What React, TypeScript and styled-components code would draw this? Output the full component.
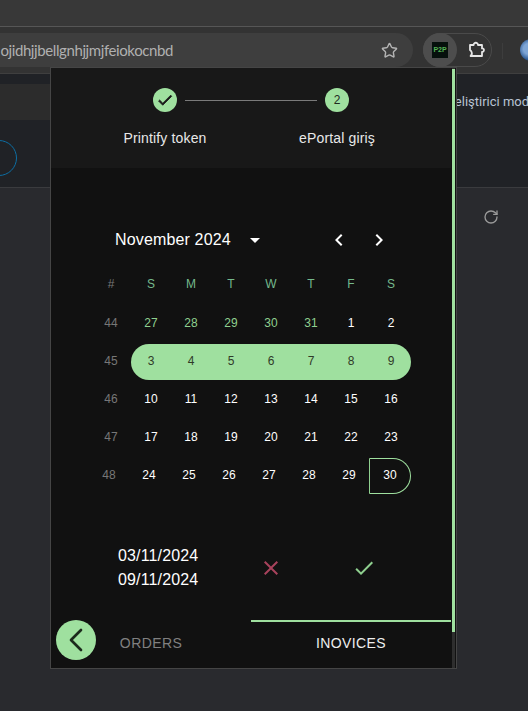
import styled, { createGlobalStyle } from "styled-components";
import { ChevronLeft, RotateCw, Star } from "lucide-react";

const GREEN = "#9fe09f";

const weeks = [
  { no: 44, days: [27, 28, 29, 30, 31, 1, 2], outside: 5 },
  { no: 45, days: [3, 4, 5, 6, 7, 8, 9], range: true },
  { no: 46, days: [10, 11, 12, 13, 14, 15, 16] },
  { no: 47, days: [17, 18, 19, 20, 21, 22, 23] },
  { no: 48, days: [24, 25, 26, 27, 28, 29, 30], shifted: true },
];

const heads = ["S", "M", "T", "W", "T", "F", "S"];

export default function App() {
  return (
    <Screen>
      <GlobalStyle />
      <TabStrip />
      <Toolbar>
        <AddressBar>
          <UrlClip>
            <Url>ojidhjjbellgnhjjmjfeiokocnbd</Url>
          </UrlClip>
          <Star size={17} strokeWidth={2} color="#b4b4b4" />
        </AddressBar>
        <ExtensionGroup>
          <ActiveExtension>
            <P2PIcon>P2P</P2PIcon>
          </ActiveExtension>
          <PuzzleSlot>
            <svg width="18" height="18" viewBox="0 0 18 18" fill="none" stroke="#e6e6e6" strokeWidth="1.8">
              <path d="M2 4h3.6c0-3 4.4-3 4.4 0H14v3.4c2.6-.6 2.6 4 0 3.4V15H2.6c1.6-1.4 1.4-3 1-4 -.4-1-1-1.6-1.6-2z" strokeLinejoin="round" />
            </svg>
          </PuzzleSlot>
        </ExtensionGroup>
        <ToolbarDivider />
        <Avatar />
      </Toolbar>
      <PageHeader>
        <RingSlot>
          <Banner />
          <Ring />
        </RingSlot>
        <DevMode>Geliştirici modu</DevMode>
      </PageHeader>
      <PageBody>
        <RotateCw size={16} strokeWidth={2} color="#9a9a9a" />
      </PageBody>

      <Popup>
        <Main>
          <StepHeader>
            <StepTrack>
              <StepCircle>
                <svg width="18" height="18" viewBox="0 0 24 24" fill="#1a1a1a" stroke="#1a1a1a" strokeWidth="1">
                  <path d="M9 16.17 4.83 12l-1.42 1.41L9 19 21 7l-1.41-1.41z" />
                </svg>
              </StepCircle>
              <StepLine />
              <StepCircle>2</StepCircle>
            </StepTrack>
            <StepLabels>
              <StepLabel>Printify token</StepLabel>
              <StepLabel>ePortal giriş</StepLabel>
            </StepLabels>
          </StepHeader>

          <CalendarHead>
            <MonthTitle>November 2024</MonthTitle>
            <HeadIcon>
              <path d="m7 10 5 5 5-5z" />
            </HeadIcon>
            <MonthNav>
              <HeadIcon>
                <path d="M15.41 7.41 14 6l-6 6 6 6 1.41-1.41L10.83 12z" />
              </HeadIcon>
              <HeadIcon>
                <path d="M10 6 8.59 7.41 13.17 12l-4.58 4.59L10 18l6-6z" />
              </HeadIcon>
            </MonthNav>
          </CalendarHead>

          <DayGrid>
            <HeadCell $muted>#</HeadCell>
            {heads.map((h, i) => (
              <HeadCell key={i}>{h}</HeadCell>
            ))}
            {weeks.map((w) => (
              <Week key={w.no}>
                <WeekNo $shifted={w.shifted}>{w.no}</WeekNo>
                {w.days.map((d, i) => {
                  if (w.range) {
                    return (
                      <RangeDay key={d} $first={i === 0} $last={i === 6}>
                        {d}
                      </RangeDay>
                    );
                  }
                  if (w.shifted && i === 6) {
                    return <EndDay key={d}>{d}</EndDay>;
                  }
                  return (
                    <Day key={d} $outside={w.outside !== undefined && i < w.outside} $shifted={w.shifted}>
                      {d}
                    </Day>
                  );
                })}
              </Week>
            ))}
          </DayGrid>

          <RangeFooter>
            <Dates>
              <div>03/11/2024</div>
              <div>09/11/2024</div>
            </Dates>
            <Actions>
              <ActionIcon viewBox="0 0 24 24" fill="#a8425c">
                <path d="M19 6.41 17.59 5 12 10.59 6.41 5 5 6.41 10.59 12 5 17.59 6.41 19 12 13.41 17.59 19 19 17.59 13.41 12z" />
              </ActionIcon>
              <ActionIcon viewBox="0 0 24 24" fill="#8fd08f">
                <path d="M9 16.17 4.83 12l-1.42 1.41L9 19 21 7l-1.41-1.41z" />
              </ActionIcon>
            </Actions>
          </RangeFooter>

          <Tabs>
            <Tab>ORDERS</Tab>
            <Tab $active>INOVICES</Tab>
          </Tabs>
        </Main>
        <ScrollTrack>
          <ScrollThumb />
        </ScrollTrack>
        <BackButton>
          <ChevronLeft size={40} strokeWidth={1.6} color="#1c2a1c" />
        </BackButton>
      </Popup>
    </Screen>
  );
}

const GlobalStyle = createGlobalStyle`
  html, body {
    margin: 0;
    padding: 0;
    background: #292a2e;
  }
  * {
    box-sizing: border-box;
  }
`;

const Screen = styled.div`
  position: relative;
  width: 528px;
  height: 711px;
  overflow: hidden;
  display: flex;
  flex-direction: column;
  background: #292a2e;
  font-family: "Liberation Sans", Arial, sans-serif;
`;

const TabStrip = styled.div`
  height: 27px;
  background: #383838;
  border-bottom: 1px solid #565656;
`;

const Toolbar = styled.div`
  height: 47px;
  background: #333333;
  border-bottom: 1px solid #3f3f3f;
  padding-top: 6px;
  display: flex;
  align-items: flex-start;
  flex-shrink: 0;
`;

const AddressBar = styled.div`
  width: 418px;
  height: 34px;
  flex-shrink: 0;
  margin-left: -5px;
  border-radius: 0 17px 17px 0;
  background: #3e3e3e;
  display: flex;
  align-items: center;
  gap: 208px;
`;

const UrlClip = styled.div`
  width: 178px;
  flex-shrink: 0;
  overflow: hidden;
  display: flex;
  justify-content: flex-end;
`;

const Url = styled.span`
  font-family: Lato, sans-serif;
  font-size: 15px;
  letter-spacing: -0.4px;
  line-height: 20px;
  color: #b0b0b0;
  white-space: nowrap;
`;

const ExtensionGroup = styled.div`
  width: 69px;
  height: 34px;
  flex-shrink: 0;
  margin-left: 10px;
  border: 1px solid #4a4a4a;
  border-radius: 17px;
  display: flex;
  align-items: center;
`;

const ActiveExtension = styled.div`
  width: 34px;
  height: 34px;
  flex-shrink: 0;
  margin-left: -1px;
  border-radius: 50%;
  background: #4d4d4d;
  display: flex;
  align-items: center;
  justify-content: center;
`;

const P2PIcon = styled.div`
  width: 16px;
  height: 16px;
  background: #06100c;
  color: #55b255;
  font-size: 7px;
  font-weight: 700;
  line-height: 16px;
  text-align: center;
`;

const PuzzleSlot = styled.div`
  flex: 1;
  display: flex;
  justify-content: center;
  padding-left: 5px;
`;

const ToolbarDivider = styled.div`
  width: 1px;
  height: 16px;
  flex-shrink: 0;
  margin: 10px 0 0 10px;
  background: #3d3d3d;
`;

const Avatar = styled.div`
  width: 22px;
  height: 22px;
  flex-shrink: 0;
  margin: 6px 0 0 17px;
  border-radius: 50%;
  background: radial-gradient(circle at 40% 45%, #7fa6d6 0 30%, #2d5a94 60%, #14213a 100%);
`;

const PageHeader = styled.div`
  height: 114px;
  flex-shrink: 0;
  background: #202226;
  border-bottom: 1px solid #3a3b3e;
  display: flex;
  justify-content: space-between;
`;

const RingSlot = styled.div`
  width: 50px;
  padding-top: 10px;
`;

const Banner = styled.div`
  height: 36px;
  background: #2c2c2c;
`;

const Ring = styled.div`
  width: 36px;
  height: 36px;
  margin: 20px 0 0 -19px;
  border: 1px solid #0d6ea3;
  border-radius: 50%;
`;

const DevMode = styled.div`
  width: 111px;
  margin-right: -29px;
  padding-top: 20px;
  font-family: Roboto, sans-serif;
  font-size: 13px;
  line-height: 15px;
  color: #b8c4d4;
  white-space: nowrap;
`;

const PageBody = styled.div`
  display: flex;
  justify-content: flex-end;
  padding: 21px 29px 0 0;
`;

const Popup = styled.div`
  position: absolute;
  left: 50px;
  top: 67px;
  width: 407px;
  height: 602px;
  display: flex;
  border: 1px solid #454545;
  background: #111111;
`;

const Main = styled.div`
  width: 400px;
  display: flex;
  flex-direction: column;
`;

const StepHeader = styled.div`
  height: 100px;
  flex-shrink: 0;
  padding-top: 20px;
  background: #181818;
`;

const StepTrack = styled.div`
  display: flex;
  align-items: center;
  margin-left: 102px;
`;

const StepCircle = styled.div`
  width: 24px;
  height: 24px;
  border-radius: 50%;
  background: ${GREEN};
  color: #1f2a1f;
  font-size: 12px;
  display: flex;
  align-items: center;
  justify-content: center;
`;

const StepLine = styled.div`
  width: 132px;
  height: 1px;
  margin: 0 8px;
  background: #7a7a7a;
`;

const StepLabels = styled.div`
  display: grid;
  grid-template-columns: 172px 172px;
  margin: 16px 0 0 28px;
`;

const StepLabel = styled.div`
  font-size: 14px;
  line-height: 20px;
  letter-spacing: 0.15px;
  color: #e8e8e8;
  text-align: center;
`;

const CalendarHead = styled.div`
  height: 32px;
  margin-top: 56px;
  padding: 0 60px 0 64px;
  display: flex;
  align-items: center;
  color: #ffffff;
`;

const MonthTitle = styled.div`
  font-size: 16px;
  line-height: 24px;
  letter-spacing: 0.15px;
  margin-right: 12px;
`;

const HeadIcon = styled.svg.attrs({ width: 24, height: 24, viewBox: "0 0 24 24", fill: "#ffffff" })``;

const MonthNav = styled.div`
  margin-left: auto;
  display: flex;
  gap: 16px;
`;

const DayGrid = styled.div`
  margin: 9px 0 0 40px;
  display: grid;
  grid-template-columns: repeat(8, 40px);
  grid-auto-rows: 36px;
  grid-template-rows: 39px;
  row-gap: 2px;
  font-size: 12px;
`;

const Week = styled.div`
  display: contents;
`;

const Cell = styled.div`
  display: flex;
  align-items: center;
  justify-content: center;
  padding-bottom: 2px;
`;

const HeadCell = styled(Cell)<{ $muted?: boolean }>`
  color: ${(p) => (p.$muted ? "#777777" : "#74b98c")};
`;

const WeekNo = styled(Cell)<{ $shifted?: boolean }>`
  color: #777777;
  padding-right: ${(p) => (p.$shifted ? "4px" : "0")};
`;

const Day = styled(Cell)<{ $outside?: boolean; $shifted?: boolean }>`
  color: ${(p) => (p.$outside ? "#8fd08f" : "#ffffff")};
  padding-right: ${(p) => (p.$shifted ? "4px" : "0")};
`;

const RangeDay = styled(Cell)<{ $first?: boolean; $last?: boolean }>`
  background: ${GREEN};
  color: #2f3a28;
  border-radius: ${(p) => (p.$first ? "18px 0 0 18px" : p.$last ? "0 18px 18px 0" : "0")};
`;

const EndDay = styled(Cell)`
  margin-left: -2px;
  border: 1px solid ${GREEN};
  border-left-color: #8fd08f;
  border-radius: 0 18px 18px 0;
  color: #ffffff;
`;

const RangeFooter = styled.div`
  margin: 50px 0 0 67px;
  display: flex;
  align-items: center;
`;

const Dates = styled.div`
  font-size: 16px;
  line-height: 24px;
  letter-spacing: 0.15px;
  color: #ffffff;
  width: 80px;
  text-align: center;
`;

const Actions = styled.div`
  margin-left: 61px;
  display: flex;
  gap: 69px;
`;

const ActionIcon = styled.svg`
  width: 24px;
  height: 24px;
`;

const Tabs = styled.div`
  margin-top: auto;
  height: 48px;
  display: grid;
  grid-template-columns: 1fr 1fr;
`;

const Tab = styled.div<{ $active?: boolean }>`
  display: flex;
  align-items: center;
  justify-content: center;
  padding-bottom: 4px;
  font-size: 14px;
  letter-spacing: 0.4px;
  color: ${(p) => (p.$active ? "#eeeeee" : "#808080")};
  border-top: 2px solid ${(p) => (p.$active ? GREEN : "transparent")};
`;

const ScrollTrack = styled.div`
  width: 3px;
  margin-left: 1px;
  background: #2e2e2e;
`;

const ScrollThumb = styled.div`
  height: 563px;
  margin-top: 1px;
  background: ${GREEN};
`;

const BackButton = styled.div`
  position: absolute;
  left: 5px;
  top: 552px;
  width: 40px;
  height: 40px;
  border-radius: 50%;
  background: ${GREEN};
  display: flex;
  align-items: center;
  justify-content: center;
`;
